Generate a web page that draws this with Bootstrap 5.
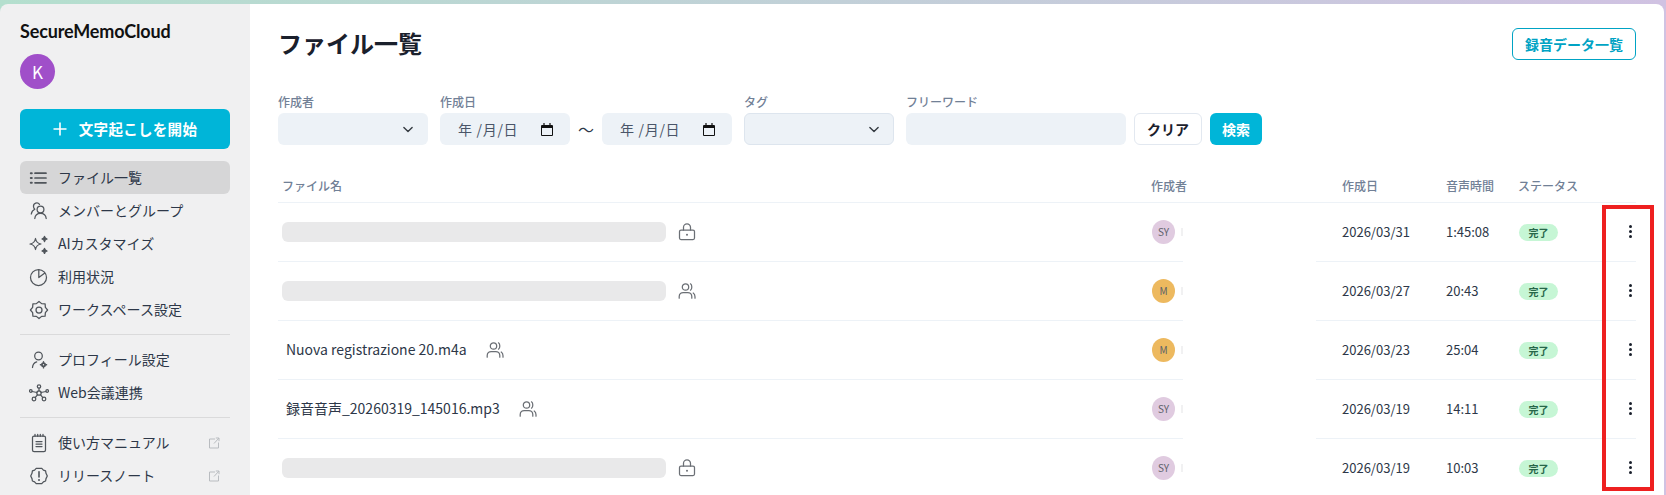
<!DOCTYPE html>
<html lang="ja">
<head>
<meta charset="utf-8">
<title>ファイル一覧</title>
<link href="https://cdn.jsdelivr.net/npm/bootstrap@5.3.0/dist/css/bootstrap.min.css" rel="stylesheet">
<style>
html,body{height:100%;}
body{font-family:"Noto Sans CJK JP","Noto Sans",sans-serif;color:#1a202c;overflow:hidden;background:linear-gradient(90deg,#b4dfce 0%,#bfd3d6 40%,#d0c2e2 100%);}
.app{height:495px;padding:4px 2px 0 0;}
.sidebar{width:250px;flex:none;background:#f0f0f1;border-radius:8px 0 0 0;padding:15px 20px 0;}
.brand{font-family:"Lato",sans-serif;font-weight:700;font-size:18px;line-height:24px;color:#111;letter-spacing:-.15px;}
.avatar-k{width:35px;height:35px;border-radius:50%;background:#a04fc9;color:#fff;font-size:17px;margin-top:11px;}
.btn-start{height:40px;width:210px;margin-top:20px;background:#00b5d8;border:0;border-radius:6px;color:#fff;font-weight:700;font-size:14.5px;letter-spacing:.3px;}
.btn-start:hover{background:#00b5d8;color:#fff;}
.side-nav{margin-top:12px;}
.side-link{height:33px;border-radius:6px;color:#2d3748;font-size:14px;padding:0 9px;gap:9px;text-decoration:none;}
.side-link.active{background:#d6d6d7;color:#2d3748;}
.side-link svg.ic{width:20px;height:20px;flex:none;stroke:#50555b;fill:none;stroke-width:1.25;stroke-linecap:round;stroke-linejoin:round;}
.side-link .ext{width:12px;height:12px;margin-left:auto;margin-right:1px;stroke:#b9bcc0;fill:none;stroke-width:1;}
.side-hr{border:0;border-top:1px solid #dadadb;opacity:1;margin:8px 0;}
.main-pane{background:#fff;border-radius:0 8px 0 0;padding:0 28px;position:relative;min-width:0;}
.title{font-size:24px;font-weight:700;line-height:32px;margin:0;color:#1a202c;}
.head-row{padding-top:23px;height:90px;}
.btn-rec{height:32px;width:124px;padding:0;border:1px solid #00a3c4;color:#00a3c4;border-radius:6px;font-size:14px;font-weight:700;background:#fff;margin-top:1px;}
.filters{height:77px;}
.fcol{margin-right:12px;}
.fcol-sel{width:150px;}
.fcol-word{width:220px;margin-right:8px;}
.fcol-btns{padding-top:19px;}
.flabel{display:block;font-size:12px;font-weight:500;color:#718096;line-height:16px;margin:0 0 3px;}
.f-control{height:32px;background-color:#edf2f7;border:0;border-radius:6px;box-shadow:none;font-size:14px;color:#4a5568;}
.f-select{background-position:right 13px center;background-size:14px 11px;padding:0;}
.f-date{width:130px;padding:0 17px 0 18px;}
.f-date span{letter-spacing:.7px;}
.tag-sel{border:1px solid #dde5ee;background-position:right 12px center;}
.tilde{width:32px;height:32px;font-size:16px;color:#2d3748;}
.fbtn{height:32px;font-size:14px;font-weight:700;border-radius:6px;padding:0;}
.btn-clear{width:68px;background:#fff;border:1px solid #e2e8f0;color:#1a202c;}
.btn-search{width:52px;background:#00b5d8;border:0;color:#fff;}
.files{table-layout:fixed;width:1358px;margin:0;color:#1a202c;}
.w-name{width:873px;}.w-who{width:32px;}.w-gap{width:133px;}.w-date{width:130px;}.w-time{width:72px;}.w-stat{width:86px;}
.files th{font-size:12px;font-weight:500;color:#718096;height:31px;padding:0 0 1px 0;vertical-align:middle;border-bottom:1px solid #edf2f7;white-space:nowrap;}
.files td{height:59px;padding:0;vertical-align:middle;font-size:13px;border-bottom:1px solid #edf2f7;color:#2d3748;}
.files td.gap{border-bottom:0;}
.files .c-name{padding-left:4px;}
.files .c-date{padding-left:26px;}
.skel{width:384px;height:20px;background:#e9e9ea;border-radius:6px;}
.fname{margin-left:4px;margin-right:11px;font-size:14px;}
.kind{width:18px;height:18px;stroke:#6b6f75;fill:none;stroke-width:1.25;stroke-linecap:round;stroke-linejoin:round;flex:none;}
.who{width:24px;height:24px;border-radius:50%;font-size:10px;color:#5d626a;margin-left:1px;}
.who.sy{background:#e0cbe0;}
.who.m{background:#edb95f;}
.stub{width:2px;height:8px;background:#f1f1f2;margin-left:6px;}
.done{display:inline-flex;align-items:center;justify-content:center;width:39px;height:17px;border-radius:9px;background:#c6f6d5;color:#276749;font-size:10px;font-weight:700;margin-left:1px;}
.dots{width:3px;height:13px;display:flex;flex-direction:column;justify-content:space-between;margin-left:25px;}
.dots i{display:block;width:3px;height:3px;background:#1a202c;border-radius:50%;}
.red-box{position:absolute;left:1352px;top:201px;width:52px;height:286px;border:4px solid #ee2020;pointer-events:none;}
</style>
</head>
<body>
<div class="app d-flex">
  <aside class="sidebar d-flex flex-column">
    <div class="brand">SecureMemoCloud</div>
    <div class="avatar-k d-flex align-items-center justify-content-center">K</div>
    <button class="btn btn-start d-flex align-items-center justify-content-center gap-2" type="button">
      <svg width="14" height="14" viewBox="0 0 14 14" fill="none" stroke="#fff" stroke-width="1.6"><path d="M7 .5v13M.5 7h13"/></svg>
      <span class="ms-1">文字起こしを開始</span>
    </button>
    <nav class="side-nav nav flex-column">
      <a class="side-link active d-flex align-items-center" href="#">
        <svg class="ic" viewBox="0 0 20 20"><path d="M6 5.200h11M6 10h11M6 14.800h11" stroke-width="1.700"/><path d="M1.800 5.200h1M1.800 10h1M1.800 14.800h1" stroke-width="2"/></svg>ファイル一覧</a>
      <a class="side-link d-flex align-items-center" href="#">
        <svg class="ic" viewBox="0 0 20 20"><circle cx="11.500" cy="8.500" r="3.400"/><path d="M5.800 17.500c.3-3.300 2.600-5.200 5.700-5.200s5.400 1.900 5.700 5.200"/><path d="M10.500 3.400A3.300 3.300 0 0 0 4.500 5.600c0 1.100.5 2 1.300 2.700-2 .9-3.200 2.600-3.500 4.700"/></svg>メンバーとグループ</a>
      <a class="side-link d-flex align-items-center" href="#">
        <svg class="ic" viewBox="0 0 20 20"><path d="M6.500 4.500c.6 3.500 2 4.900 5.500 5.500-3.500.6-4.900 2-5.500 5.500C5.900 12 4.500 10.600 1 10c3.500-.6 4.900-2 5.500-5.500z"/><path d="M15.500 2.400c.2 1.500.9 2.200 2.600 2.600-1.700.4-2.400 1.100-2.600 2.600-.2-1.500-.9-2.200-2.600-2.600 1.700-.4 2.400-1.100 2.600-2.600zM15.500 14.400c.2 1.500.9 2.200 2.600 2.600-1.700.4-2.400 1.100-2.600 2.600-.2-1.500-.9-2.200-2.600-2.600 1.700-.4 2.400-1.100 2.600-2.600z" fill="#50555b"/></svg>AIカスタマイズ</a>
      <a class="side-link d-flex align-items-center" href="#">
        <svg class="ic" viewBox="0 0 20 20"><circle cx="9.500" cy="10.500" r="8"/><path d="M9.800 2.500v8l6-4.500" /></svg>利用状況</a>
      <a class="side-link d-flex align-items-center" href="#">
        <svg class="ic" viewBox="0 0 20 20"><polygon points="10,1.400 12.640,3.630 16.100,3.900 16.370,7.360 18.600,10 16.370,12.640 16.100,16.100 12.640,16.370 10,18.600 7.360,16.370 3.900,16.100 3.630,12.640 1.400,10 3.630,7.360 3.900,3.900 7.360,3.630"/><circle cx="10" cy="10" r="3"/></svg>ワークスペース設定</a>
      <hr class="side-hr">
      <a class="side-link d-flex align-items-center" href="#">
        <svg class="ic" viewBox="0 0 20 20"><circle cx="9.500" cy="6" r="3.800"/><path d="M3.500 17.500c.2-3 1.700-5 4.200-5.700"/><circle cx="14.500" cy="14.800" r="1.600" stroke-width="1.800"/><path d="M14.500 11.700v.8M14.500 17.100v.8M11.400 14.800h.8M16.800 14.800h.8" stroke-width="1.400"/></svg>プロフィール設定</a>
      <a class="side-link d-flex align-items-center" href="#">
        <svg class="ic" viewBox="0 0 20 20"><circle cx="10" cy="3.500" r="1.700"/><circle cx="1.800" cy="8" r="1.300"/><circle cx="18.200" cy="8" r="1.300"/><circle cx="5" cy="16" r="1.800"/><circle cx="15" cy="16" r="1.800"/><circle cx="10" cy="10" r="2.200"/><path d="M10 5.200v2.600M3.100 8.500l4.900 1M16.900 8.500l-4.900 1M6.200 14.700l2.400-3M13.800 14.700l-2.400-3"/></svg>Web会議連携</a>
      <hr class="side-hr">
      <a class="side-link d-flex align-items-center" href="#">
        <svg class="ic" viewBox="0 0 20 20" stroke-width="1.500"><rect x="3.500" y="3" width="13" height="15.500" rx="1.600"/><path d="M7 8.500h6M7 11h6M7 13.500h6"/><path d="M6 1.300v2M8.700 1.300v2M11.300 1.300v2M14 1.300v2"/></svg>使い方マニュアル
        <svg class="ext" viewBox="0 0 12 12"><path d="M7 2H1.500v9h9V5.500M6 6.500 11 1M7.800 1H11v3.200"/></svg></a>
      <a class="side-link d-flex align-items-center" href="#">
        <svg class="ic" viewBox="0 0 20 20"><path d="M7.200 2.400h5.600l1.600 1.700 2.200.8.400 2.400 1.300 2.700-1.300 2.600-.4 2.400-2.200.9-1.600 1.700H7.200l-1.600-1.700-2.200-.9-.4-2.400L1.700 10 3 7.300l.4-2.400 2.200-.8z"/><path d="M10 5.800v5.200" stroke-width="1.600"/><path d="M10 14h.01" stroke-width="2"/></svg>リリースノート
        <svg class="ext" viewBox="0 0 12 12"><path d="M7 2H1.500v9h9V5.500M6 6.500 11 1M7.800 1H11v3.200"/></svg></a>
    </nav>
  </aside>
  <main class="main-pane flex-grow-1">
    <div class="head-row d-flex justify-content-between align-items-start">
      <h1 class="title">ファイル一覧</h1>
      <button class="btn btn-rec" type="button">録音データ一覧</button>
    </div>
    <form class="filters d-flex align-items-start" onsubmit="return false">
      <div class="fcol fcol-sel"><label class="flabel">作成者</label><select class="form-select f-control f-select"><option></option></select></div>
      <div class="fcol"><label class="flabel">作成日</label>
        <div class="d-flex align-items-center">
          <div class="f-control f-date d-flex align-items-center justify-content-between"><span>年 /月/日</span>
            <svg width="12" height="13" viewBox="0 0 12 13"><path d="M1 2h10a1 1 0 0 1 1 1v9a1 1 0 0 1-1 1H1a1 1 0 0 1-1-1V3a1 1 0 0 1 1-1zM1 5v7h10V5z" fill="#111" fill-rule="evenodd"/><path d="M3 0v2M9 0v2" stroke="#111" stroke-width="1.200"/></svg></div>
          <div class="tilde d-flex align-items-center justify-content-center">〜</div>
          <div class="f-control f-date d-flex align-items-center justify-content-between"><span>年 /月/日</span>
            <svg width="12" height="13" viewBox="0 0 12 13"><path d="M1 2h10a1 1 0 0 1 1 1v9a1 1 0 0 1-1 1H1a1 1 0 0 1-1-1V3a1 1 0 0 1 1-1zM1 5v7h10V5z" fill="#111" fill-rule="evenodd"/><path d="M3 0v2M9 0v2" stroke="#111" stroke-width="1.200"/></svg></div>
        </div></div>
      <div class="fcol fcol-sel"><label class="flabel">タグ</label><select class="form-select f-control f-select tag-sel"><option></option></select></div>
      <div class="fcol fcol-word"><label class="flabel">フリーワード</label><input class="form-control f-control" type="text"></div>
      <div class="fcol-btns d-flex gap-2">
        <button class="btn fbtn btn-clear" type="button">クリア</button>
        <button class="btn fbtn btn-search" type="button">検索</button>
      </div>
    </form>
    <table class="table files">
      <colgroup><col class="w-name"><col class="w-who"><col class="w-gap"><col class="w-date"><col class="w-time"><col class="w-stat"><col></colgroup>
      <thead><tr><th class="c-name">ファイル名</th><th>作成者</th><th></th><th class="c-date">作成日</th><th>音声時間</th><th>ステータス</th><th></th></tr></thead>
      <tbody>
        <tr><td class="c-name"><div class="d-flex align-items-center gap-2"><div class="skel me-1"></div><svg class="kind" viewBox="0 0 18 18"><use href="#lock"/></svg></div></td>
          <td><div class="d-flex align-items-center"><div class="who sy d-flex align-items-center justify-content-center">SY</div><div class="stub"></div></div></td><td class="gap"></td><td class="c-date">2026/03/31</td><td>1:45:08</td><td><span class="done">完了</span></td><td><div class="dots"><i></i><i></i><i></i></div></td></tr>
        <tr><td class="c-name"><div class="d-flex align-items-center gap-2"><div class="skel me-1"></div><svg class="kind" viewBox="0 0 18 18"><use href="#people"/></svg></div></td>
          <td><div class="d-flex align-items-center"><div class="who m d-flex align-items-center justify-content-center">M</div><div class="stub"></div></div></td><td class="gap"></td><td class="c-date">2026/03/27</td><td>20:43</td><td><span class="done">完了</span></td><td><div class="dots"><i></i><i></i><i></i></div></td></tr>
        <tr><td class="c-name"><div class="d-flex align-items-center gap-2"><span class="fname">Nuova registrazione 20.m4a</span><svg class="kind" viewBox="0 0 18 18"><use href="#people"/></svg></div></td>
          <td><div class="d-flex align-items-center"><div class="who m d-flex align-items-center justify-content-center">M</div><div class="stub"></div></div></td><td class="gap"></td><td class="c-date">2026/03/23</td><td>25:04</td><td><span class="done">完了</span></td><td><div class="dots"><i></i><i></i><i></i></div></td></tr>
        <tr><td class="c-name"><div class="d-flex align-items-center gap-2"><span class="fname">録音音声_20260319_145016.mp3</span><svg class="kind" viewBox="0 0 18 18"><use href="#people"/></svg></div></td>
          <td><div class="d-flex align-items-center"><div class="who sy d-flex align-items-center justify-content-center">SY</div><div class="stub"></div></div></td><td class="gap"></td><td class="c-date">2026/03/19</td><td>14:11</td><td><span class="done">完了</span></td><td><div class="dots"><i></i><i></i><i></i></div></td></tr>
        <tr><td class="c-name"><div class="d-flex align-items-center gap-2"><div class="skel me-1"></div><svg class="kind" viewBox="0 0 18 18"><use href="#lock"/></svg></div></td>
          <td><div class="d-flex align-items-center"><div class="who sy d-flex align-items-center justify-content-center">SY</div><div class="stub"></div></div></td><td class="gap"></td><td class="c-date">2026/03/19</td><td>10:03</td><td><span class="done">完了</span></td><td><div class="dots"><i></i><i></i><i></i></div></td></tr>
      </tbody>
    </table>
    <div class="red-box"></div>
  </main>
</div>
<svg width="0" height="0" class="position-absolute"><defs>
  <g id="lock"><rect x="1.500" y="7" width="15" height="9.500" rx="1.500"/><path d="M5.500 7V4.300a3.500 3.500 0 0 1 7 0V7"/><path d="M9 11.700h.01" stroke-width="2"/></g>
  <g id="people"><circle cx="7.500" cy="5" r="3.200"/><path d="M1.200 16.200v-1.700c0-2.500 2-4 4-4h4.600c2 0 4 1.500 4 4v1.700"/><path d="M12.500 1.800c1.700 1.200 1.800 5 0 6.400M15.200 11c1.200.8 1.800 2.300 1.800 3.700v1.500"/></g>
</defs></svg>
<script src="https://cdn.jsdelivr.net/npm/bootstrap@5.3.0/dist/js/bootstrap.bundle.min.js"></script>
</body>
</html>
